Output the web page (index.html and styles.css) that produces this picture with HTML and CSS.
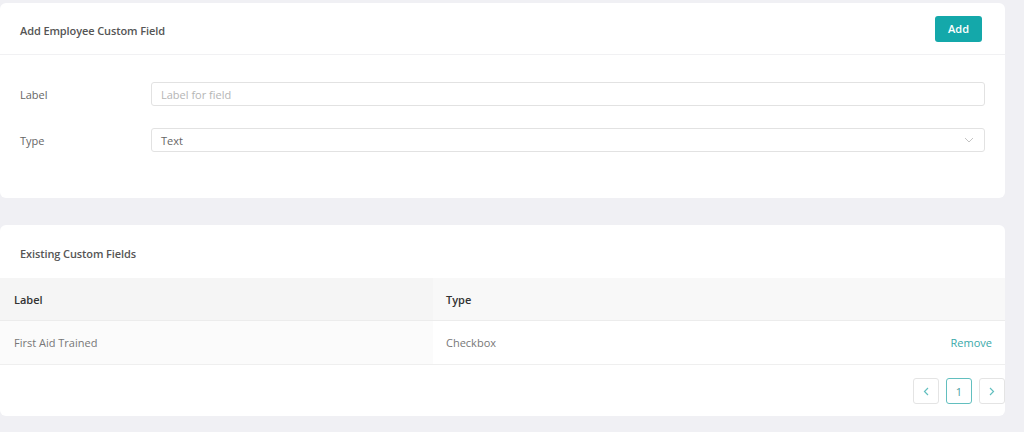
FILE: index.html
```html
<!DOCTYPE html>
<html>
<head>
<meta charset="utf-8">
<link rel="stylesheet" href="styles.css">
</head>
<body>
<div class="page">
  <section class="card card-add">
    <header class="card-head">
      <h2 class="card-title">Add Employee Custom Field</h2>
      <button class="btn-add">Add</button>
    </header>
    <div class="form">
      <div class="form-row">
        <label class="form-label">Label</label>
        <div class="field"><span class="placeholder">Label for field</span></div>
      </div>
      <div class="form-row">
        <label class="form-label">Type</label>
        <div class="field select">
          <span class="value">Text</span>
          <svg class="chev" width="10" height="6" viewBox="0 0 10 6"><path d="M1 1l4 4 4-4" fill="none" stroke="#c4c4c4" stroke-width="1"/></svg>
        </div>
      </div>
    </div>
  </section>

  <section class="card card-list">
    <header class="list-head">
      <h2 class="card-title">Existing Custom Fields</h2>
    </header>
    <div class="table">
      <div class="tr thead">
        <div class="td c-label">Label</div>
        <div class="td c-type">Type</div>
      </div>
      <div class="tr tbody">
        <div class="td c-label">First Aid Trained</div>
        <div class="td c-type"><span>Checkbox</span><a class="remove">Remove</a></div>
      </div>
    </div>
    <div class="pager">
      <button class="pg"><svg width="6" height="9" viewBox="0 0 6 9"><path d="M5 1L1.5 4.5 5 8" fill="none" stroke="#62bfbf" stroke-width="1.2"/></svg></button>
      <button class="pg active">1</button>
      <button class="pg"><svg width="6" height="9" viewBox="0 0 6 9"><path d="M1 1l3.5 3.5L1 8" fill="none" stroke="#62bfbf" stroke-width="1.2"/></svg></button>
    </div>
  </section>
</div>
</body>
</html>
```
FILE: styles.css
```css
* { box-sizing: border-box; }
html, body { margin: 0; padding: 0; }
body {
  background: #f0f0f4;
  font-family: "Open Sans", "Liberation Sans", sans-serif;
  font-size: 11px;
  color: #666;
  width: 1024px;
  height: 432px;
  overflow: hidden;
}
.page {
  width: 1005px;
  padding-top: 3px;
  display: flex;
  flex-direction: column;
  gap: 27px;
}
.card {
  background: #fff;
  border-radius: 6px;
}
.card-add { height: 195px; }
.card-head {
  height: 52px;
  border-bottom: 1px solid #f1f1f3;
  display: flex;
  align-items: center;
  justify-content: space-between;
  padding: 0 23px 0 20px;
}
.card-title {
  margin: 0;
  font-size: 11px;
  font-weight: 600;
  color: #555;
  letter-spacing: -0.1px;
}
.card-head .card-title { margin-top: 4px; }
.btn-add {
  width: 47px;
  height: 26px;
  border: none;
  border-radius: 3px;
  background: #14a8aa;
  color: #fff;
  font-family: inherit;
  font-size: 11px;
  font-weight: 600;
  padding: 0;
}
.form {
  padding: 27px 20px 0 20px;
  display: flex;
  flex-direction: column;
  gap: 22px;
}
.form-row {
  display: flex;
  align-items: center;
}
.form-label {
  width: 131px;
  color: #666;
}
.field {
  flex: 1;
  height: 24px;
  border: 1px solid #e2e2e2;
  border-radius: 3px;
  display: flex;
  align-items: center;
  justify-content: space-between;
  padding: 0 9px;
}
.placeholder { color: #b5b5b5; }
.value { color: #666; }
.chev { margin-right: 1px; }

.card-list { height: 191px; display: flex; flex-direction: column; }
.list-head {
  height: 53px;
  display: flex;
  align-items: center;
  padding: 4px 20px 0;
}
.table { display: flex; flex-direction: column; }
.tr { display: flex; }
.td { display: flex; align-items: center; }
.c-label { width: 433px; padding-left: 14px; }
.c-type { flex: 1; padding: 0 13px; justify-content: space-between; }
.thead { height: 43px; border-bottom: 1px solid #ececec; }
.thead .c-label { background: #f5f5f5; }
.thead .c-type { background: #f8f8f8; }
.thead .td { color: #333; font-weight: 600; }
.tbody { height: 44px; border-bottom: 1px solid #efefef; }
.tbody .c-label { background: #fbfbfb; color: #777; }
.tbody .c-type { color: #777; }
.remove { color: #3aa9a9; }
.pager {
  display: flex;
  justify-content: flex-end;
  gap: 7px;
  padding-top: 13px;
}
.pg {
  width: 26px;
  height: 26px;
  border: 1px solid #e4e4e4;
  border-radius: 3px;
  background: #fff;
  display: flex;
  align-items: center;
  justify-content: center;
  font-family: inherit;
  font-size: 11px;
  color: #5aa;
  padding: 0;
}
.pg.active { border-color: #62bfbf; color: #4a9e9e; }
```
